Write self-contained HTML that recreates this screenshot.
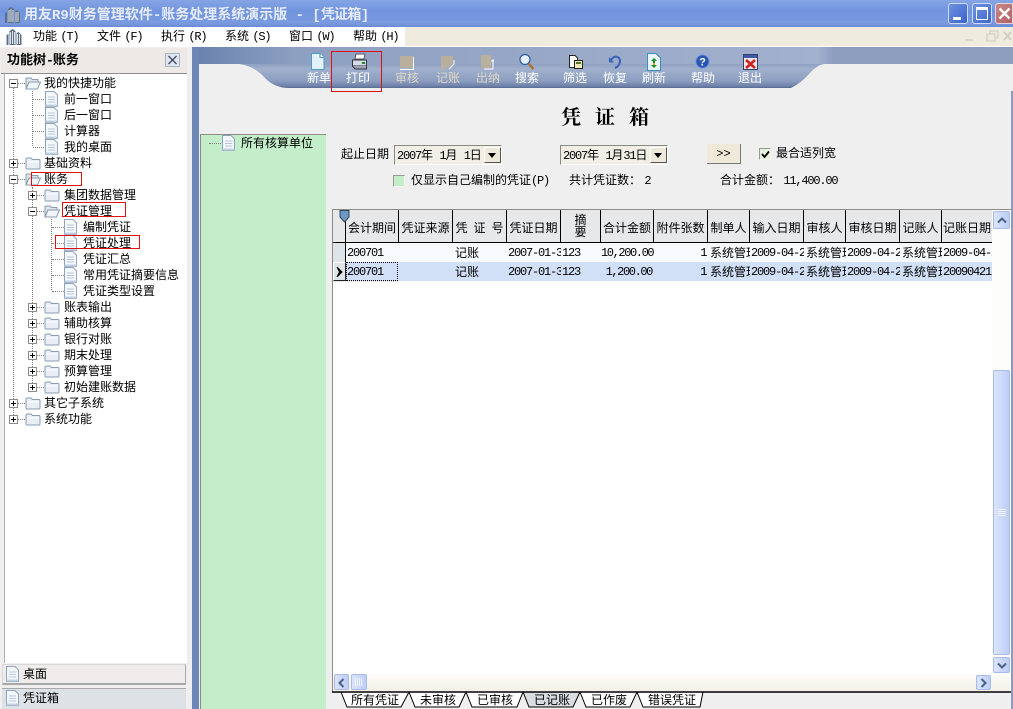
<!DOCTYPE html>
<html><head><meta charset="utf-8"><style>
html,body{margin:0;padding:0;width:1013px;height:709px;overflow:hidden;background:#efefef}
body{position:relative;font:12px/16px "Liberation Sans","WenQuanYi Zen Hei","Noto Sans CJK SC",sans-serif;color:#000}
.a,.t,svg.i{position:absolute}
.t{white-space:nowrap}
.n{font-family:"Liberation Mono",monospace;letter-spacing:-1.2px}
.w{color:#fff;text-align:center;width:50px;top:70px}
.d{color:#ddd6c4}
.r{position:absolute;border:1px solid #e01010;box-sizing:border-box}
.lv{position:absolute;border-left:1px dotted #808080;width:0}
.lh{position:absolute;border-top:1px dotted #808080;height:0}
table{position:absolute;left:333px;top:210px;width:660px;border-collapse:separate;border-spacing:0;table-layout:fixed}
th{background:#e6e8ea;border-right:1px solid #000;border-bottom:1px solid #000;font-weight:normal;height:33px;box-sizing:border-box;padding:10px 0 0;white-space:nowrap;overflow:hidden;line-height:16px;vertical-align:top}
th.z{padding-top:4px;line-height:12px}
td{height:19px;padding:0 0 0 1px;white-space:nowrap;overflow:hidden;box-sizing:border-box;text-align:left}
td.c{padding-left:2px}
td.f{padding-left:1px}
tr.r1 td{background:#f7f9fd}
tr.r2 td{background:#d1dff7}
td.x{background:#dfe4e8!important;border-right:1px solid #000}
td.m{text-align:right;padding:0 2px 0 0}
td.m .n{letter-spacing:-1.4px}
.cb{position:absolute;box-sizing:border-box;border:1px solid #9a9a90;border-right-color:#f6f6f0;border-bottom-color:#f6f6f0}
.dp{position:absolute;box-sizing:border-box;width:108px;height:20px;top:145px;background:#f1eee6;border:1px solid #8a8a80;border-right-color:#fff;border-bottom-color:#fff;padding:1px 0 0 2px;line-height:16px;white-space:nowrap;word-spacing:3px}
.db{position:absolute;right:0;top:1px;width:17px;height:16px;background:#ece8da;border-top:1px solid #fff;border-left:1px solid #fff;border-right:1px solid #555;border-bottom:1px solid #555;box-sizing:border-box}
.db:after{content:"";position:absolute;left:3px;top:5px;border:4px solid transparent;border-top:5px solid #000;border-bottom:0}
.sb{position:absolute;box-sizing:border-box;background:linear-gradient(90deg,#dbe5fd,#bccdf8);border:1px solid #a9bbe4;border-radius:2px}
</style></head><body>
<svg width="0" height="0" style="position:absolute"><defs>
<symbol id="fo" viewBox="0 0 16 14"><path d="M1 3.5 Q1 2 2.5 2 H6 L7.5 3.5 H14 Q15 3.5 15 5 V12 Q15 13 14 13 H2 Q1 13 1 12Z" fill="#e8eef4" stroke="#8a9cb0"/><path d="M1.5 6 H14.5" stroke="#fff"/></symbol>
<symbol id="fx" viewBox="0 0 16 14"><path d="M1 3 Q1 2 2 2 H6 L7.5 3.5 H13 V6 H4 L1 13Z" fill="#dde5ec" stroke="#8a9cb0"/><path d="M1 13 L4 6 H15.5 L12.5 13Z" fill="#f2f5f8" stroke="#8a9cb0"/></symbol>
<symbol id="dc" viewBox="0 0 13 16"><path d="M.5 .5 H9 L12.5 4 V15.5 H.5Z" fill="#f4f7fc" stroke="#8fa3bf"/><path d="M3 6H10M3 8.500H10M3 11H10" stroke="#b8c7dc"/><path d="M.5 13.500H12.500V15.500H.5Z" fill="#c3d0e2"/></symbol>
<symbol id="pl" viewBox="0 0 9 9"><rect x=".5" y=".5" width="8" height="8" fill="#fff" stroke="#8c8c84"/><path d="M2 4.500H7M4.500 2V7" stroke="#000"/></symbol>
<symbol id="mi" viewBox="0 0 9 9"><rect x=".5" y=".5" width="8" height="8" fill="#fff" stroke="#8c8c84"/><path d="M2 4.500H7" stroke="#000"/></symbol>
<symbol id="bd" viewBox="0 0 17 18"><path d="M1 17V7L3 6V17ZM4 17V3L7 1 10 3V17ZM11 17V5L13 4 16 7V17Z" fill="#5f6f84"/><path d="M5 4V16M7 3V16M9 4V16M12 6V16M14 6V16" stroke="#dfe6ee"/></symbol>
<linearGradient id="tb" x1="0" y1="0" x2="0" y2="1"><stop offset="0" stop-color="#8fa1c3"/><stop offset=".2" stop-color="#a0b0cd"/><stop offset=".7" stop-color="#8c9ec0"/><stop offset=".92" stop-color="#6f82a8"/><stop offset="1" stop-color="#566a92"/></linearGradient>
<linearGradient id="tt" x1="0" y1="0" x2="1" y2="0"><stop offset="0" stop-color="#6a84ae"/><stop offset=".12" stop-color="#8ea0c2"/><stop offset=".76" stop-color="#a2b1cd"/><stop offset=".78" stop-color="#8d9ebf"/><stop offset="1" stop-color="#8d9ebf"/></linearGradient>
</defs></svg>

<!-- title bar -->
<div class="a" style="left:0;top:0;width:1013px;height:27px;background:linear-gradient(#86a5e4,#7094dd 40%,#7a9ae0 85%,#6c8bd2)"></div>
<svg class="i" style="left:4px;top:6px" width="17" height="18"><use href="#bd"/></svg>
<div class="t" style="left:24px;top:5px;font-size:14px;line-height:18px;font-weight:bold;color:#e6ebf8">用友<span style="font-family:'Liberation Mono'">R9</span>财务管理软件<span style="font-family:'Liberation Mono'">-</span>账务处理系统演示版<span style="font-family:'Liberation Mono'"> - [</span><span style="letter-spacing:-.7px">凭证箱</span><span style="font-family:'Liberation Mono'">]</span></div>
<div class="a" style="left:948px;top:3px;width:20px;height:21px;box-sizing:border-box;border:1px solid #cfdcf6;border-radius:3px;background:linear-gradient(135deg,#6e93e2,#3b62c8)"><div class="a" style="left:4px;top:13px;width:8px;height:3px;background:#fff"></div></div>
<div class="a" style="left:972px;top:3px;width:20px;height:21px;box-sizing:border-box;border:1px solid #cfdcf6;border-radius:3px;background:linear-gradient(135deg,#6e93e2,#3f66cc)"><div class="a" style="left:3px;top:3px;width:12px;height:13px;box-sizing:border-box;border:1px solid #fff;border-top-width:3px"></div></div>
<div class="a" style="left:995px;top:3px;width:18px;height:21px;box-sizing:border-box;border:1px solid #e4d4dc;border-radius:3px 0 0 3px;background:linear-gradient(135deg,#c98886,#b25f63)"><svg class="i" style="left:2px;top:3px" width="13" height="13"><path d="M1.500 1.500L11.500 11.500M11.500 1.500L1.500 11.500" stroke="#fff" stroke-width="2.400"/></svg></div>

<!-- menu -->
<div class="a" style="left:0;top:27px;width:1013px;height:19px;background:#efebde"></div>
<div class="a" style="left:0;top:27px;width:405px;height:19px;background:#fff"></div>
<svg class="i" style="left:5px;top:28px" width="18" height="18"><use href="#bd"/></svg>
<div class="t" style="left:33px;top:28px">功能 <span class="n">(T)</span></div>
<div class="t" style="left:97px;top:28px">文件 <span class="n">(F)</span></div>
<div class="t" style="left:161px;top:28px">执行 <span class="n">(R)</span></div>
<div class="t" style="left:225px;top:28px">系统 <span class="n">(S)</span></div>
<div class="t" style="left:289px;top:28px">窗口 <span class="n">(W)</span></div>
<div class="t" style="left:353px;top:28px">帮助 <span class="n">(H)</span></div>
<svg class="i" style="left:962px;top:29px" width="50" height="15"><path d="M3 11H11" stroke="#dcd8cc" stroke-width="2"/><path d="M25 5H33V12H25ZM28 5V2H36V9H33" fill="none" stroke="#cfcbbf"/><path d="M42 3L49 11M49 3L42 11" stroke="#d0ccc0" stroke-width="2"/></svg>
<div class="a" style="left:0;top:46px;width:1013px;height:1px;background:#fff"></div>

<!-- left panel -->
<div class="a" style="left:0;top:47px;width:192px;height:662px;background:#f0eeee"></div>
<div class="a" style="left:1px;top:48px;width:186px;height:26px;background:#ece9e6;border-bottom:1px solid #8e8e8e;box-sizing:border-box"></div>
<div class="t" style="left:7px;top:52px;font-weight:bold;font-size:13px">功能树<span class="n" style="letter-spacing:-1px">-</span>账务</div>
<div class="a" style="left:165px;top:53px;width:15px;height:14px;box-sizing:border-box;border:1px solid #a9b2c0;background:#dfe5ee"><svg class="i" style="left:1px;top:1px" width="11" height="10"><path d="M1.500 1L9.500 9M9.500 1L1.500 9" stroke="#3c4a63" stroke-width="1.300"/></svg></div>
<div class="a" style="left:4px;top:74px;width:183px;height:589px;background:#fff;border-left:1px solid #b0b0b0;box-sizing:border-box"></div>

<!-- tree lines -->
<div class="lv" style="left:13px;top:88px;height:331px"></div>
<div class="lv" style="left:32px;top:91px;height:55px"></div>
<div class="lv" style="left:32px;top:187px;height:200px"></div>
<div class="lv" style="left:51px;top:219px;height:71px"></div>
<div class="lh" style="left:18px;top:83px;width:7px"></div><div class="lh" style="left:18px;top:163px;width:7px"></div><div class="lh" style="left:18px;top:179px;width:7px"></div><div class="lh" style="left:18px;top:403px;width:7px"></div><div class="lh" style="left:18px;top:419px;width:7px"></div>
<div class="lh" style="left:33px;top:99px;width:11px"></div><div class="lh" style="left:33px;top:115px;width:11px"></div><div class="lh" style="left:33px;top:131px;width:11px"></div><div class="lh" style="left:33px;top:147px;width:11px"></div>
<div class="lh" style="left:37px;top:195px;width:7px"></div><div class="lh" style="left:37px;top:211px;width:7px"></div><div class="lh" style="left:37px;top:307px;width:7px"></div><div class="lh" style="left:37px;top:323px;width:7px"></div><div class="lh" style="left:37px;top:339px;width:7px"></div><div class="lh" style="left:37px;top:355px;width:7px"></div><div class="lh" style="left:37px;top:371px;width:7px"></div><div class="lh" style="left:37px;top:387px;width:7px"></div>
<div class="lh" style="left:52px;top:227px;width:12px"></div><div class="lh" style="left:52px;top:243px;width:12px"></div><div class="lh" style="left:52px;top:259px;width:12px"></div><div class="lh" style="left:52px;top:275px;width:12px"></div><div class="lh" style="left:52px;top:291px;width:12px"></div>

<!-- tree -->
<svg class="i" style="left:9px;top:79px" width="9" height="9"><use href="#mi"/></svg><svg class="i" style="left:25px;top:76px" width="16" height="14"><use href="#fx"/></svg><div class="t" style="left:44px;top:75px">我的快捷功能</div>
<svg class="i" style="left:45px;top:91px" width="13" height="16"><use href="#dc"/></svg><div class="t" style="left:64px;top:91px">前一窗口</div>
<svg class="i" style="left:45px;top:107px" width="13" height="16"><use href="#dc"/></svg><div class="t" style="left:64px;top:107px">后一窗口</div>
<svg class="i" style="left:45px;top:123px" width="13" height="16"><use href="#dc"/></svg><div class="t" style="left:64px;top:123px">计算器</div>
<svg class="i" style="left:45px;top:139px" width="13" height="16"><use href="#dc"/></svg><div class="t" style="left:64px;top:139px">我的桌面</div>
<svg class="i" style="left:9px;top:159px" width="9" height="9"><use href="#pl"/></svg><svg class="i" style="left:25px;top:156px" width="16" height="14"><use href="#fo"/></svg><div class="t" style="left:44px;top:155px">基础资料</div>
<svg class="i" style="left:9px;top:175px" width="9" height="9"><use href="#mi"/></svg><svg class="i" style="left:25px;top:172px" width="16" height="14"><use href="#fx"/></svg><div class="t" style="left:44px;top:171px">账务</div>
<svg class="i" style="left:28px;top:191px" width="9" height="9"><use href="#pl"/></svg><svg class="i" style="left:44px;top:188px" width="16" height="14"><use href="#fo"/></svg><div class="t" style="left:64px;top:187px">集团数据管理</div>
<svg class="i" style="left:28px;top:207px" width="9" height="9"><use href="#mi"/></svg><svg class="i" style="left:44px;top:204px" width="16" height="14"><use href="#fx"/></svg><div class="t" style="left:64px;top:203px">凭证管理</div>
<svg class="i" style="left:64px;top:219px" width="13" height="16"><use href="#dc"/></svg><div class="t" style="left:83px;top:219px">编制凭证</div>
<svg class="i" style="left:64px;top:235px" width="13" height="16"><use href="#dc"/></svg><div class="t" style="left:83px;top:235px">凭证处理</div>
<svg class="i" style="left:64px;top:251px" width="13" height="16"><use href="#dc"/></svg><div class="t" style="left:83px;top:251px">凭证汇总</div>
<svg class="i" style="left:64px;top:267px" width="13" height="16"><use href="#dc"/></svg><div class="t" style="left:83px;top:267px">常用凭证摘要信息</div>
<svg class="i" style="left:64px;top:283px" width="13" height="16"><use href="#dc"/></svg><div class="t" style="left:83px;top:283px">凭证类型设置</div>
<svg class="i" style="left:28px;top:303px" width="9" height="9"><use href="#pl"/></svg><svg class="i" style="left:44px;top:300px" width="16" height="14"><use href="#fo"/></svg><div class="t" style="left:64px;top:299px">账表输出</div>
<svg class="i" style="left:28px;top:319px" width="9" height="9"><use href="#pl"/></svg><svg class="i" style="left:44px;top:316px" width="16" height="14"><use href="#fo"/></svg><div class="t" style="left:64px;top:315px">辅助核算</div>
<svg class="i" style="left:28px;top:335px" width="9" height="9"><use href="#pl"/></svg><svg class="i" style="left:44px;top:332px" width="16" height="14"><use href="#fo"/></svg><div class="t" style="left:64px;top:331px">银行对账</div>
<svg class="i" style="left:28px;top:351px" width="9" height="9"><use href="#pl"/></svg><svg class="i" style="left:44px;top:348px" width="16" height="14"><use href="#fo"/></svg><div class="t" style="left:64px;top:347px">期末处理</div>
<svg class="i" style="left:28px;top:367px" width="9" height="9"><use href="#pl"/></svg><svg class="i" style="left:44px;top:364px" width="16" height="14"><use href="#fo"/></svg><div class="t" style="left:64px;top:363px">预算管理</div>
<svg class="i" style="left:28px;top:383px" width="9" height="9"><use href="#pl"/></svg><svg class="i" style="left:44px;top:380px" width="16" height="14"><use href="#fo"/></svg><div class="t" style="left:64px;top:379px">初始建账数据</div>
<svg class="i" style="left:9px;top:399px" width="9" height="9"><use href="#pl"/></svg><svg class="i" style="left:25px;top:396px" width="16" height="14"><use href="#fo"/></svg><div class="t" style="left:44px;top:395px">其它子系统</div>
<svg class="i" style="left:9px;top:415px" width="9" height="9"><use href="#pl"/></svg><svg class="i" style="left:25px;top:412px" width="16" height="14"><use href="#fo"/></svg><div class="t" style="left:44px;top:411px">系统功能</div>

<div class="r" style="left:31px;top:172px;width:51px;height:14px"></div>
<div class="r" style="left:62px;top:202px;width:64px;height:15px"></div>
<div class="r" style="left:55px;top:235px;width:85px;height:14px"></div>

<!-- bottom left buttons -->
<div class="a" style="left:2px;top:664px;width:184px;height:21px;box-sizing:border-box;background:#f0ecec;border:1px solid #d8d8d8;border-right-color:#a8a8a8;border-bottom:2px solid #a8a8a8"></div>
<svg class="i" style="left:6px;top:666px" width="13" height="16"><use href="#dc"/></svg><div class="t" style="left:23px;top:666px">桌面</div>
<div class="a" style="left:2px;top:688px;width:184px;height:21px;box-sizing:border-box;background:#dde2e6;border-top:1px solid #a8a8a8"></div>
<svg class="i" style="left:6px;top:690px" width="13" height="16"><use href="#dc"/></svg><div class="t" style="left:23px;top:690px">凭证箱</div>

<!-- blue strip + toolbar -->
<div class="a" style="left:192px;top:47px;width:7px;height:662px;background:#6c87b5"></div>
<svg class="i" style="left:199px;top:47px" width="814" height="44">
<rect width="814" height="44" fill="#efefef"/>
<rect width="814" height="17" fill="url(#tt)"/>
<path d="M45 17H625Q618 18 610 27T592 41H90Q75 41 65 30T40 17Z" fill="url(#tb)"/>
</svg>

<!-- toolbar icons -->
<svg class="i" style="left:311px;top:53px" width="14" height="17"><path d="M.5 .5H9L13 4.500V16.500H.5Z" fill="#e3f1fb" stroke="#4f9cc9"/><path d="M9 .5V4.500H13" fill="#fff" stroke="#4f9cc9"/></svg>
<svg class="i" style="left:351px;top:53px" width="17" height="17"><path d="M5 1H14L13 6H4Z" fill="#fff" stroke="#556"/><path d="M1.500 7H15.500V13H1.500Z" fill="#d5dbe5" stroke="#334"/><path d="M1.500 13L4 16H15.500V13" fill="#9aa4b5" stroke="#334"/><rect x="11" y="9" width="3" height="2" fill="#1e8a30"/></svg>
<svg class="i" style="left:399px;top:55px" width="15" height="15"><rect x="1" y="1" width="13" height="12" fill="#b8af9c"/><path d="M14.500 2V14.500H1" fill="none" stroke="#fff"/></svg>
<svg class="i" style="left:440px;top:55px" width="15" height="16"><path d="M1 1H13V8L9 12H6L5 15H1Z" fill="#b8af9c"/><path d="M14 5V9L9 14" fill="none" stroke="#fff"/></svg>
<svg class="i" style="left:480px;top:54px" width="15" height="17"><rect x="1" y="1" width="10" height="13" fill="#b8af9c"/><path d="M13 5V15H4M11 7H14" fill="none" stroke="#fff"/></svg>
<svg class="i" style="left:518px;top:53px" width="17" height="18"><circle cx="7" cy="6.500" r="5" fill="#e6f1fb" stroke="#2f5ea8" stroke-width="1.300"/><path d="M10.500 10.500L15.500 16" stroke="#a5743a" stroke-width="2.500"/></svg>
<svg class="i" style="left:567px;top:53px" width="17" height="18"><path d="M2.500 2.500H8L10.500 5V14.500H2.500Z" fill="#fff" stroke="#222"/><path d="M7.500 7.500H15.500V15.500H7.500Z" fill="#f0e8b8" stroke="#222"/><rect x="9" y="9" width="5" height="2" fill="#5a7030"/></svg>
<svg class="i" style="left:608px;top:54px" width="14" height="15"><path d="M1.500 7.500L5 3.500C8 1.500 12 3 12 7C12 10 10 13 7 14" fill="none" stroke="#3d62b5" stroke-width="2"/><path d="M1 3V8.500H6Z" fill="#3d62b5"/></svg>
<svg class="i" style="left:647px;top:53px" width="14" height="18"><path d="M.5 .5H9L13.500 5V17.500H.5Z" fill="#e8f5fb" stroke="#3a90c0"/><path d="M7 5L4 8H6V10H8V8H10ZM7 15L4 12H10Z" fill="#1d8f28"/><path d="M6 10H8V12H6Z" fill="#d0a020"/></svg>
<svg class="i" style="left:695px;top:54px" width="15" height="15"><circle cx="7.500" cy="7.500" r="6.700" fill="#2a55b5" stroke="#7ea0dc"/><text x="7.500" y="11.500" font-size="11" font-weight="bold" fill="#fff" text-anchor="middle" font-family="Liberation Sans">?</text></svg>
<svg class="i" style="left:743px;top:54px" width="15" height="16"><rect x=".5" y=".5" width="14" height="15" fill="#f5e8e8" stroke="#34406a"/><rect x="1" y="1" width="13" height="3" fill="#3d5aa8"/><path d="M3 6L12 14M12 6L3 14" stroke="#d02020" stroke-width="2.600"/></svg>

<div class="t w" style="left:294px">新单</div>
<div class="t w" style="left:333px">打印</div>
<div class="t w d" style="left:382px">审核</div>
<div class="t w d" style="left:423px">记账</div>
<div class="t w d" style="left:463px">出纳</div>
<div class="t w" style="left:502px">搜索</div>
<div class="t w" style="left:550px">筛选</div>
<div class="t w" style="left:590px">恢复</div>
<div class="t w" style="left:629px">刷新</div>
<div class="t w" style="left:678px">帮助</div>
<div class="t w" style="left:725px">退出</div>
<div class="r" style="left:331px;top:51px;width:51px;height:41px"></div>

<!-- heading -->
<div class="t" style="left:561px;top:104px;font:bold 20px/24px 'Noto Serif CJK SC','WenQuanYi Zen Hei',serif;letter-spacing:14px">凭证箱</div>

<!-- green -->
<div class="a" style="left:200px;top:134px;width:126px;height:575px;background:#c4edc9;border-top:1px solid #8c8c84;border-left:1px solid #8c8c84;box-sizing:border-box"></div>
<div class="lh" style="left:209px;top:143px;width:12px"></div>
<svg class="i" style="left:222px;top:135px" width="13" height="16"><use href="#dc"/></svg>
<div class="t" style="left:241px;top:135px">所有核算单位</div>

<!-- form -->
<div class="t" style="left:341px;top:146px">起止日期</div>
<div class="dp" style="left:394px">
<span class="n">2007</span>年 <span class="n">1</span>月 <span class="n">1</span>日<div class="db"></div></div>
<div class="dp" style="left:560px"><span class="n">2007</span>年 <span class="n">1</span>月<span class="n">31</span>日<div class="db"></div></div>
<div class="a" style="left:707px;top:144px;width:34px;height:20px;box-sizing:border-box;background:#efe9da;border-right:1px solid #777;border-bottom:1px solid #777;text-align:center;line-height:18px"><span class="n" style="letter-spacing:0">&gt;&gt;</span></div>
<div class="cb" style="left:759px;top:148px;width:12px;height:12px;background:#e6f2dd"><svg class="i" style="left:1px;top:1px" width="9" height="9"><path d="M1 4L3.500 7L8 1.500" fill="none" stroke="#000" stroke-width="1.800"/></svg></div>
<div class="t" style="left:776px;top:145px">最合适列宽</div>
<div class="cb" style="left:393px;top:175px;width:12px;height:12px;background:#c4edc9"></div>
<div class="t" style="left:411px;top:172px">仅显示自己编制的凭证<span class="n">(P)</span></div>
<div class="t" style="left:569px;top:172px">共计凭证数： <span class="n">2</span></div>
<div class="t" style="left:720px;top:172px">合计金额： <span class="n">11,400.00</span></div>

<!-- grid -->
<div class="a" style="left:332px;top:209px;width:679px;height:483px;background:#fff;border-top:1px solid #8c8c84;border-left:1px solid #8c8c84;box-sizing:border-box"></div>
<table>
<colgroup><col style="width:13px"><col style="width:53px"><col style="width:54px"><col style="width:54px"><col style="width:54px"><col style="width:40px"><col style="width:53px"><col style="width:54px"><col style="width:42px"><col style="width:54px"><col style="width:42px"><col style="width:54px"><col style="width:42px"><col style="width:51px"></colgroup>
<tr><th></th><th>会计期间</th><th>凭证来源</th><th style="word-spacing:2.700px">凭 证 号</th><th>凭证日期</th><th class="z">摘<br>要</th><th>合计金额</th><th>附件张数</th><th>制单人</th><th>输入日期</th><th>审核人</th><th>审核日期</th><th>记账人</th><th>记账日期</th></tr>
<tr class="r1"><td class="x"></td><td class="f"><span class="n">200701</span></td><td></td><td class="c">记账</td><td><span class="n">2007-01-31</span></td><td><span class="n">123</span></td><td class="m"><span class="n">10,200.00</span></td><td class="m"><span class="n">1</span></td><td class="c">系统管理员</td><td><span class="n">2009-04-21</span></td><td class="c">系统管理员</td><td><span class="n">2009-04-21</span></td><td class="c">系统管理员</td><td><span class="n">2009-04-21</span></td></tr>
<tr class="r2"><td class="x"></td><td class="f"><span class="n">200701</span></td><td></td><td class="c">记账</td><td><span class="n">2007-01-31</span></td><td><span class="n">123</span></td><td class="m"><span class="n">1,200.00</span></td><td class="m"><span class="n">1</span></td><td class="c">系统管理员</td><td><span class="n">2009-04-21</span></td><td class="c">系统管理员</td><td><span class="n">2009-04-21</span></td><td class="c">系统管理员</td><td><span class="n">20090421</span></td></tr>
</table>
<svg class="i" style="left:339px;top:210px" width="12" height="13"><path d="M1 .5H10V7L5.500 12L1 7Z" fill="#6f97c4" stroke="#33465f"/></svg>
<div class="a" style="left:333px;top:262px;width:13px;height:19px;box-sizing:border-box;border:1px solid #222;border-left-color:#fff;border-top-color:#fff"></div>
<svg class="i" style="left:336px;top:266px" width="8" height="12"><path d="M1 1L6 6L1 11L3.500 6Z" fill="#000" stroke="#000"/></svg>
<div class="a" style="left:346px;top:262px;width:52px;height:19px;box-sizing:border-box;border:1px dotted #000"></div>
<div class="a" style="left:333px;top:281px;width:65px;height:1px;border-top:1px dotted #d8d8d8"></div>

<!-- vertical scrollbar -->
<div class="a" style="left:992px;top:210px;width:19px;height:464px;background:#fdfdfb"></div>
<div class="sb" style="left:993px;top:211px;width:17px;height:18px"><svg class="i" style="left:3px;top:5px" width="10" height="7"><path d="M1 5.500L5 1.500L9 5.500" fill="none" stroke="#4d6185" stroke-width="2"/></svg></div>
<div class="sb" style="left:993px;top:370px;width:17px;height:285px"><svg class="i" style="left:4px;top:138px" width="8" height="8"><path d="M0 .5H8M0 2.500H8M0 4.500H8M0 6.500H8" stroke="#eef3ff"/></svg></div>
<div class="sb" style="left:993px;top:657px;width:17px;height:16px"><svg class="i" style="left:3px;top:4px" width="10" height="7"><path d="M1 1.500L5 5.500L9 1.500" fill="none" stroke="#4d6185" stroke-width="2"/></svg></div>
<!-- horizontal scrollbar -->
<div class="a" style="left:333px;top:674px;width:677px;height:17px;background:linear-gradient(#fdfdfb,#f3f0e6)"></div>
<div class="sb" style="left:334px;top:674px;width:15px;height:16px"><svg class="i" style="left:3px;top:3px" width="7" height="10"><path d="M5.500 1L1.500 5L5.500 9" fill="none" stroke="#4d6185" stroke-width="2"/></svg></div>
<div class="sb" style="left:351px;top:674px;width:16px;height:16px"><svg class="i" style="left:3px;top:3px" width="8" height="8"><path d="M.5 0V8M2.500 0V8M4.500 0V8M6.500 0V8" stroke="#eef3ff"/></svg></div>
<div class="sb" style="left:976px;top:675px;width:15px;height:15px"><svg class="i" style="left:3px;top:2px" width="7" height="10"><path d="M1.500 1L5.500 5L1.500 9" fill="none" stroke="#4d6185" stroke-width="2"/></svg></div>

<!-- tabs -->
<svg class="i" style="left:332px;top:691px" width="681" height="18">
<path d="M9 1L15 16H69L77 1" fill="#fff" stroke="#000"/>
<path d="M77 1L83 16H127L134 1" fill="#fff" stroke="#000"/>
<path d="M134 1L140 16H185L191 1" fill="#fff" stroke="#000"/>
<path d="M248 1L254 16H298L305 1" fill="#fff" stroke="#000"/>
<path d="M305 1L311 16H368L371 1" fill="#fff" stroke="#000"/>
<path d="M191 1L197 16H241L248 1" fill="#d8dde1" stroke="#000"/>
<path d="M0 1H681" stroke="#000" stroke-width="1.500"/>
</svg>
<div class="t" style="left:351px;top:692px">所有凭证</div>
<div class="t" style="left:420px;top:692px">未审核</div>
<div class="t" style="left:477px;top:692px">已审核</div>
<div class="t" style="left:534px;top:692px">已记账</div>
<div class="t" style="left:591px;top:692px">已作废</div>
<div class="t" style="left:648px;top:692px">错误凭证</div>

<div class="a" style="left:1011px;top:91px;width:2px;height:618px;background:#8c9cb8"></div>
</body></html>
